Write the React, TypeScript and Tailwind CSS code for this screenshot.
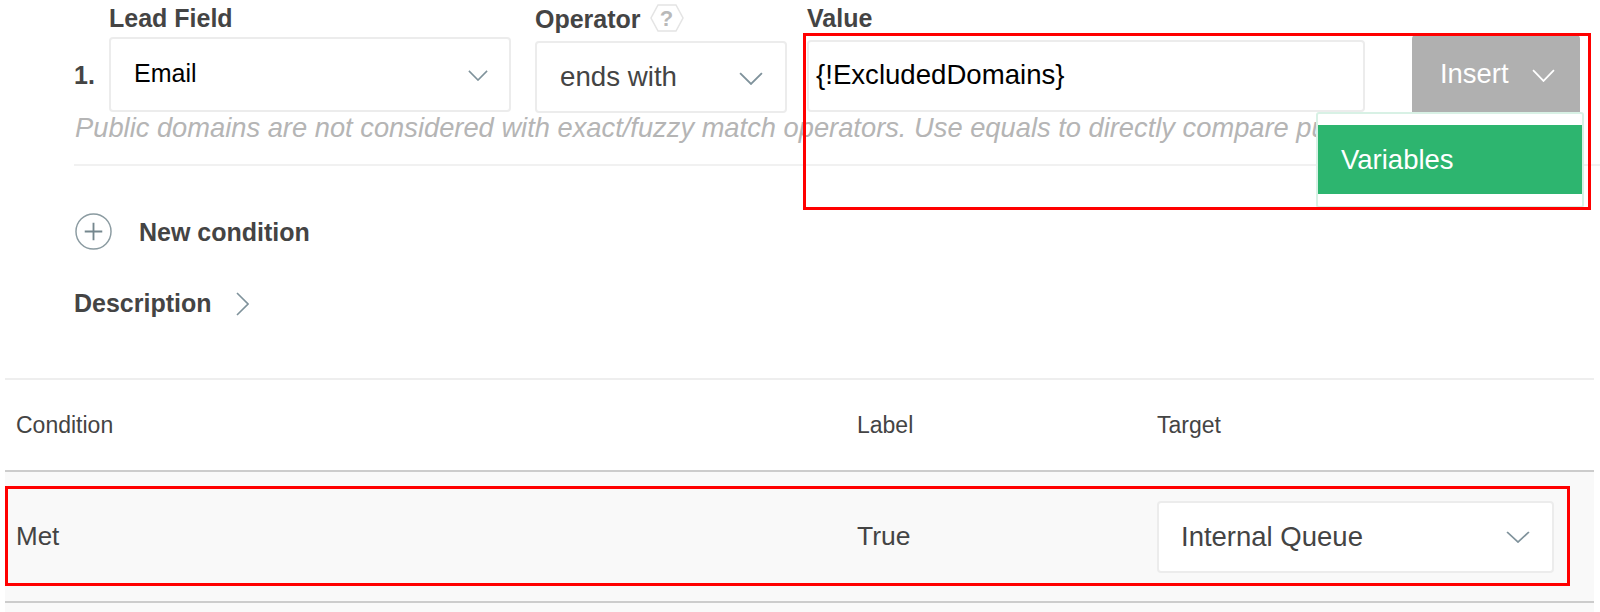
const Chevron = ({ className = '', color = '#7f929b' }: { className?: string; color?: string }) => (
  <svg viewBox="0 0 22 12" fill="none" preserveAspectRatio="none" className={className}>
    <polyline points="1,1 11,11 21,1" stroke={color} strokeWidth="1.7" />
  </svg>
);

const boxClass = 'bg-white border-2 border-[#ececec] rounded-[4px] flex items-center';

export default function App() {
  return (
    <div className="relative w-[1600px] h-[612px] overflow-hidden bg-white text-[#444444] font-['Liberation_Sans',Arial,sans-serif]">
      <div className="h-[378px] pl-[74px] overflow-hidden">
        {/* condition row */}
        <div className="flex items-start">
          <div className="w-[35px] pt-[57px] text-[25px] leading-[36px] font-bold">1.</div>

          <div className="w-[402px] mr-[24px]">
            <div className="h-[37px] pt-[3px] text-[25px] leading-[30px] font-bold">Lead Field</div>
            <div className={`${boxClass} h-[75px] pl-[23px] pr-[21px] justify-between pb-[2px]`}>
              <span className="text-[25px] text-black">Email</span>
              <Chevron className="w-[20px] h-[11px] mt-[3px]" />
            </div>
          </div>

          <div className="w-[252px] mr-[20px]">
            <div className="h-[41px] pt-[4px] flex items-start">
              <span className="text-[25px] leading-[30px] font-bold">Operator</span>
              <span className="relative ml-[9px] w-[34px] h-[28px] flex items-center justify-center text-[22px] font-bold text-[#b9b9b9]">
                <svg viewBox="0 0 34 28" fill="none" className="absolute inset-0 w-full h-full">
                  <polygon points="8,1 26,1 33,14 26,27 8,27 1,14" stroke="#e4e4e4" strokeWidth="1.5" />
                </svg>
                <span className="relative">?</span>
              </span>
            </div>
            <div className={`${boxClass} h-[72px] pl-[23px] pr-[22px] justify-between`}>
              <span className="text-[27.7px] text-[#444444]">ends with</span>
              <Chevron className="w-[24px] h-[13px] mt-[2px]" />
            </div>
          </div>

          <div className="flex-1 flex items-start">
            <div className="w-[558px] mr-[47px]">
              <div className="h-[40px] pt-[3px] text-[25px] leading-[30px] font-bold">Value</div>
              <div className={`${boxClass} h-[72px] pl-[7px] pb-[3px]`}>
                <span className="text-[27.6px] text-black">{'{!ExcludedDomains}'}</span>
              </div>
            </div>
            <div className="mt-[35px] w-[168px] h-[78px] bg-[#b0b0b0] rounded-t-[4px] flex items-center pl-[28px] text-white text-[27.4px]">
              <span>Insert</span>
              <Chevron className="w-[23px] h-[13px] ml-[23px] mt-[2px]" color="#ffffff" />
            </div>
          </div>
        </div>

        <div className="mt-[-2px] h-[55px] pl-[1px] border-b-2 border-[#f1f1f1] text-[27.3px] leading-[34px] italic text-[#b5b5b5] whitespace-nowrap">
          Public domains are not considered with exact/fuzzy match operators. Use equals to directly compare public domains.
        </div>

        <div className="mt-[47px] flex items-center">
          <svg viewBox="0 0 38 38" fill="none" className="w-[39px] h-[37px]">
            <circle cx="19" cy="19" r="18" stroke="#8b9ba1" strokeWidth="1.5" />
            <path d="M19 10v18M10 19h18" stroke="#75878e" strokeWidth="1.9" />
          </svg>
          <span className="ml-[26px] text-[25px] font-bold translate-y-[1px]">New condition</span>
        </div>

        <div className="mt-[34px] flex items-center">
          <span className="text-[25px] font-bold">Description</span>
          <svg viewBox="0 0 13 24" fill="none" className="w-[13px] h-[24px] ml-[24px] mt-[2px]">
            <polyline points="1,1 12,12 1,23" stroke="#7f929b" strokeWidth="1.6" />
          </svg>
        </div>
      </div>

      {/* table */}
      <div className="ml-[5px] w-[1589px]">
        <div className="h-[94px] border-y-2 border-t-[#eeeeee] border-b-[#cccccc] flex items-center text-[23px]">
          <div className="w-[852px] pl-[11px]">Condition</div>
          <div className="w-[300px]">Label</div>
          <div>Target</div>
        </div>
        <div className="h-[131px] border-b-2 border-[#cccccc] bg-[#f9f9f9] flex items-center text-[26.5px]">
          <div className="w-[852px] pl-[11px] text-[26px]">Met</div>
          <div className="w-[300px]">True</div>
          <div className={`${boxClass} w-[397px] h-[72px] pl-[22px] pr-[22px] justify-between`}>
            <span className="text-[27.5px]">Internal Queue</span>
            <Chevron className="w-[24px] h-[12px]" />
          </div>
        </div>
        <div className="h-[20px] bg-[#f9f9f9]" />
      </div>

      {/* Insert menu */}
      <div className="absolute left-[1316px] top-[112px] w-[268px] h-[96px] bg-white border-2 border-[#d8f1e5] rounded-[3px] pt-[11px]">
        <div className="h-[69px] bg-[#2db56f] flex items-center pl-[23px] text-white text-[27.5px]">Variables</div>
      </div>

      {/* annotation boxes */}
      <div className="absolute left-[803px] top-[33px] w-[788px] h-[177px] border-[3px] border-[#ff0000] pointer-events-none" />
      <div className="absolute left-[5px] top-[486px] w-[1565px] h-[100px] border-[3px] border-[#ff0000] pointer-events-none" />
    </div>
  );
}
